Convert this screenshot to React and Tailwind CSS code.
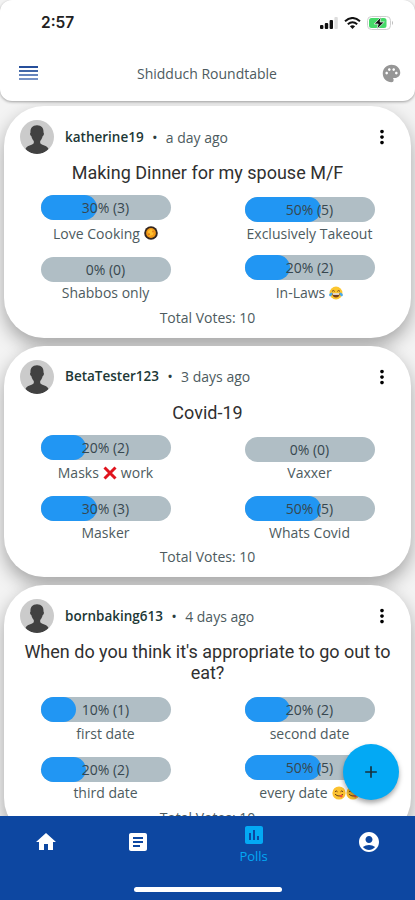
import React from 'react';
import { MdHome, MdArticle, MdInsertChart, MdAccountCircle, MdPalette, MdMoreVert, MdAdd } from 'react-icons/md';

function Dish() {
  return (
    <svg viewBox="0 0 14 14" className="size-[14px]">
      <circle cx="7" cy="7" r="6.8" fill="#33251f" />
      <circle cx="7" cy="7" r="4.9" fill="#f39a16" />
      <path d="M4 5l3-2 3 2-1 4-4 1z" fill="#ffc02e" />
      <circle cx="5" cy="8.3" r="1" fill="#d9741b" />
      <circle cx="9" cy="5.5" r="1" fill="#e67c1b" />
    </svg>
  );
}

function Joy() {
  return (
    <svg viewBox="0 0 14 14" className="size-[14px]">
      <circle cx="7" cy="7" r="6.4" fill="#fcc62f" />
      <path d="M3 5.4q1.300-1.800 2.700 0M8.300 5.400q1.400-1.800 2.700 0" fill="none" stroke="#73481a" strokeWidth="1" />
      <path d="M3 7.3h8q-.6 4.2-4 4.2T3 7.300z" fill="#764119" />
      <path d="M3.500 7.300h7l-.5 1.400H4z" fill="#fff" />
      <path d="M3.300 6.600Q0 7 .1 9.300c.4 2 3.300 1.500 3.200-2.700zM10.700 6.600q3.300.4 3.200 2.700c-.4 2-3.300 1.500-3.200-2.700z" fill="#4aa8e8" />
    </svg>
  );
}

function Yum() {
  return (
    <svg viewBox="0 0 14 14" className="size-[14px]">
      <circle cx="7" cy="7" r="6.6" fill="#fcc230" />
      <path d="M3 5.800q1.200-1.800 2.500 0M8.500 5.800q1.300-1.800 2.500 0M3 8.200q4 3.600 8 0" fill="none" stroke="#6b4319" strokeWidth="1" />
      <path d="M7.300 9.600l2.800-1q1.400 2.600-.6 2.900-1.600 0-2.200-1.900z" fill="#f0523d" />
    </svg>
  );
}

function Cross() {
  return (
    <svg viewBox="0 0 14 14" className="size-[14px]">
      <path d="M1.500 1.500l11 11M12.500 1.500l-11 11" stroke="#e0141e" strokeWidth="3" />
    </svg>
  );
}

function Avatar() {
  return (
    <svg viewBox="0 0 34 34" className="size-[34px] rounded-full">
      <rect width="34" height="34" fill="#cbcbcb" />
      <path d="M17 5.200c-4.600 0-6.800 3-6.500 7.200-.9.500-.3 3.300.8 3.700.5 2.300 1.300 3.700 2.500 4.900v2.300c-1.300 1.800-7 2.200-8.300 5.700C8.500 32.500 12.500 34 17 34s8.500-1.500 11.500-5c-1.300-3.500-7-3.900-8.300-5.700V21c1.200-1.200 2-2.600 2.500-4.900 1.100-.4 1.700-3.200.8-3.700.3-4.200-1.900-7.200-6.500-7.200z" fill="#414141" />
    </svg>
  );
}

const polls = [
  {
    user: 'katherine19', age: 'a day ago', title: 'Making Dinner for my spouse M/F',
    options: [
      { pct: 30, fill: 56, votes: 3, label: 'Love Cooking', icons: [Dish] },
      { pct: 50, fill: 76.5, votes: 5, label: 'Exclusively Takeout' },
      { pct: 0, fill: 0, votes: 0, label: 'Shabbos only' },
      { pct: 20, fill: 45.5, votes: 2, label: 'In-Laws', icons: [Joy] },
    ],
  },
  {
    user: 'BetaTester123', age: '3 days ago', title: 'Covid-19',
    options: [
      { pct: 20, fill: 45.5, votes: 2, label: 'Masks', icons: [Cross], after: 'work' },
      { pct: 0, fill: 0, votes: 0, label: 'Vaxxer' },
      { pct: 30, fill: 56, votes: 3, label: 'Masker' },
      { pct: 50, fill: 76.5, votes: 5, label: 'Whats Covid' },
    ],
  },
  {
    user: 'bornbaking613', age: '4 days ago', title: "When do you think it's appropriate to go out to eat?",
    options: [
      { pct: 10, fill: 35.5, votes: 1, label: 'first date' },
      { pct: 20, fill: 45.5, votes: 2, label: 'second date' },
      { pct: 20, fill: 45.5, votes: 2, label: 'third date' },
      { pct: 50, fill: 76.5, votes: 5, label: 'every date', icons: [Yum, Yum] },
    ],
  },
];

function Option({ option }) {
  return (
    <div className="flex h-[50px] w-[130px] flex-col items-center justify-center">
      <div className="relative flex h-[25px] w-full shrink-0 items-center justify-center rounded-full bg-[#b0bec5]">
        <div className="absolute inset-y-0 left-0 rounded-full bg-[#2196f3]" style={{ width: option.fill }} />
        <span className="relative text-[14px] text-[#37474f]">{option.pct}% ({option.votes})</span>
      </div>
      <div className={`mt-px flex shrink-0 items-center gap-1 whitespace-nowrap text-[14px] ${option.icons ? 'h-6' : 'h-5'}`}>
        <span>{option.label}</span>
        {option.icons && <span className="flex">{option.icons.map((Icon, i) => <Icon key={i} />)}</span>}
        {option.after && <span>{option.after}</span>}
      </div>
    </div>
  );
}

function PollCard({ poll }) {
  return (
    <article className="shrink-0 rounded-[40px] bg-white pb-[10px] pt-[14px] shadow-[0_8px_18px_rgba(0,0,0,0.32)]">
      <div className="flex h-[34px] items-center pl-4 pr-[18px]">
        <Avatar />
        <span className="ml-[11px] text-[13.5px] font-semibold text-[#1d3836]">{poll.user}</span>
        <span className="mx-[9px] text-[11px] font-bold text-[#2c3d40]">•</span>
        <span className="text-[14px]">{poll.age}</span>
        <MdMoreVert className="ml-auto size-[22px] text-black" />
      </div>
      <h2 className="mt-[8px] px-4 text-center font-[Roboto,sans-serif] text-[18px] leading-[21px] text-[#303030]">{poll.title}</h2>
      <div className="mt-[12px] grid grid-cols-[130px_130px] justify-center gap-x-[74px] gap-y-[9.5px]">
        {poll.options.map((o) => <Option key={o.label} option={o} />)}
      </div>
      <p className="mt-[3px] text-center text-[14px] leading-5">Total Votes: 10</p>
    </article>
  );
}

export default function App() {
  return (
    <div className="relative flex h-[900px] w-[415px] flex-col overflow-hidden bg-[#f3f3f3] font-['Open_Sans',sans-serif] text-[#4d5b60]">
      <header className="z-10 h-[101px] shrink-0 rounded-[12px] bg-white shadow-[0_1px_3px_rgba(0,0,0,0.35)]">
        <div className="flex h-[46px] items-center pl-[41px] pr-[21px]">
          <span className="font-[Inter,sans-serif] text-[15.5px] font-semibold text-[#222]">2:57</span>
          <div className="ml-auto flex items-center gap-[6px]">
            <svg viewBox="0 0 18 12" className="h-3 w-[18px]">
              <rect y="8" width="3.400" height="4" rx="1" fill="#111" />
              <rect x="4.800" y="6" width="3.400" height="6" rx="1" fill="#111" />
              <rect x="9.600" y="3" width="3.400" height="9" rx="1" fill="#111" />
              <rect x="14.400" width="3.400" height="12" rx="1" fill="#ddd" />
            </svg>
            <svg viewBox="0 0 17 12" className="h-3 w-[17px]" fill="none" stroke="#111" strokeWidth="2">
              <path d="M1 4.200q7.500-6.400 15 0M3.800 7.200q4.700-4 9.400 0" />
              <path d="M5.900 9.300q2.600-2 5.200 0L8.500 12z" fill="#111" stroke="none" />
            </svg>
            <svg viewBox="0 0 27 14" className="h-[14px] w-[27px]">
              <rect x=".5" y=".5" width="23" height="13" rx="4" fill="#fff" stroke="#cfcfcf" />
              <rect x="2" y="2" width="17.500" height="10" rx="2.500" fill="#45d968" />
              <path d="M25 4.800q2 2.200 0 4.400z" fill="#bbb" />
              <path d="M14 1L7.200 8h4L9.900 13.200 17.300 6h-4.200z" fill="#111" stroke="#fff" strokeWidth=".7" />
            </svg>
          </div>
        </div>
        <div className="flex h-[54px] items-center justify-between pl-[19px] pr-[13px]">
          <div className="flex w-[19px] flex-col gap-[1.5px]">
            <span className="h-[2.5px] bg-[#264f9b]" />
            <span className="h-[2.5px] bg-[#4267a8]" />
            <span className="h-[2.5px] bg-[#6685bd]" />
            <span className="h-[2.5px] bg-[#7692c6]" />
          </div>
          <h1 className="mr-[5px] text-[14px]">Shidduch Roundtable</h1>
          <MdPalette className="size-[21px] text-[#969696]" />
        </div>
      </header>
      <main className="flex min-h-0 flex-1 flex-col gap-2 overflow-hidden px-1 pt-[5px]">
        {polls.map((p) => <PollCard key={p.user} poll={p} />)}
      </main>
      <button className="absolute left-[343px] top-[744px] z-10 flex size-14 items-center justify-center rounded-full bg-[#03a9f4] text-[#17303c] shadow-[0_3px_5px_rgba(0,0,0,0.35)]">
        <MdAdd className="size-5" />
      </button>
      <footer className="z-10 flex h-[84px] shrink-0 flex-col items-center bg-[#0d47a1] text-white">
        <nav className="grid h-[52px] w-full grid-cols-[2fr_2fr_3fr_2fr] place-items-center">
          <MdHome className="size-6" />
          <MdArticle className="size-6" />
          <div className="flex flex-col items-center pt-1 text-[#03a9f4]">
            <MdInsertChart className="size-6" />
            <span className="text-[13px] leading-[19px]">Polls</span>
          </div>
          <MdAccountCircle className="size-6" />
        </nav>
        <div className="mt-[19px] h-[5px] w-[148px] rounded-full bg-white" />
      </footer>
    </div>
  );
}
